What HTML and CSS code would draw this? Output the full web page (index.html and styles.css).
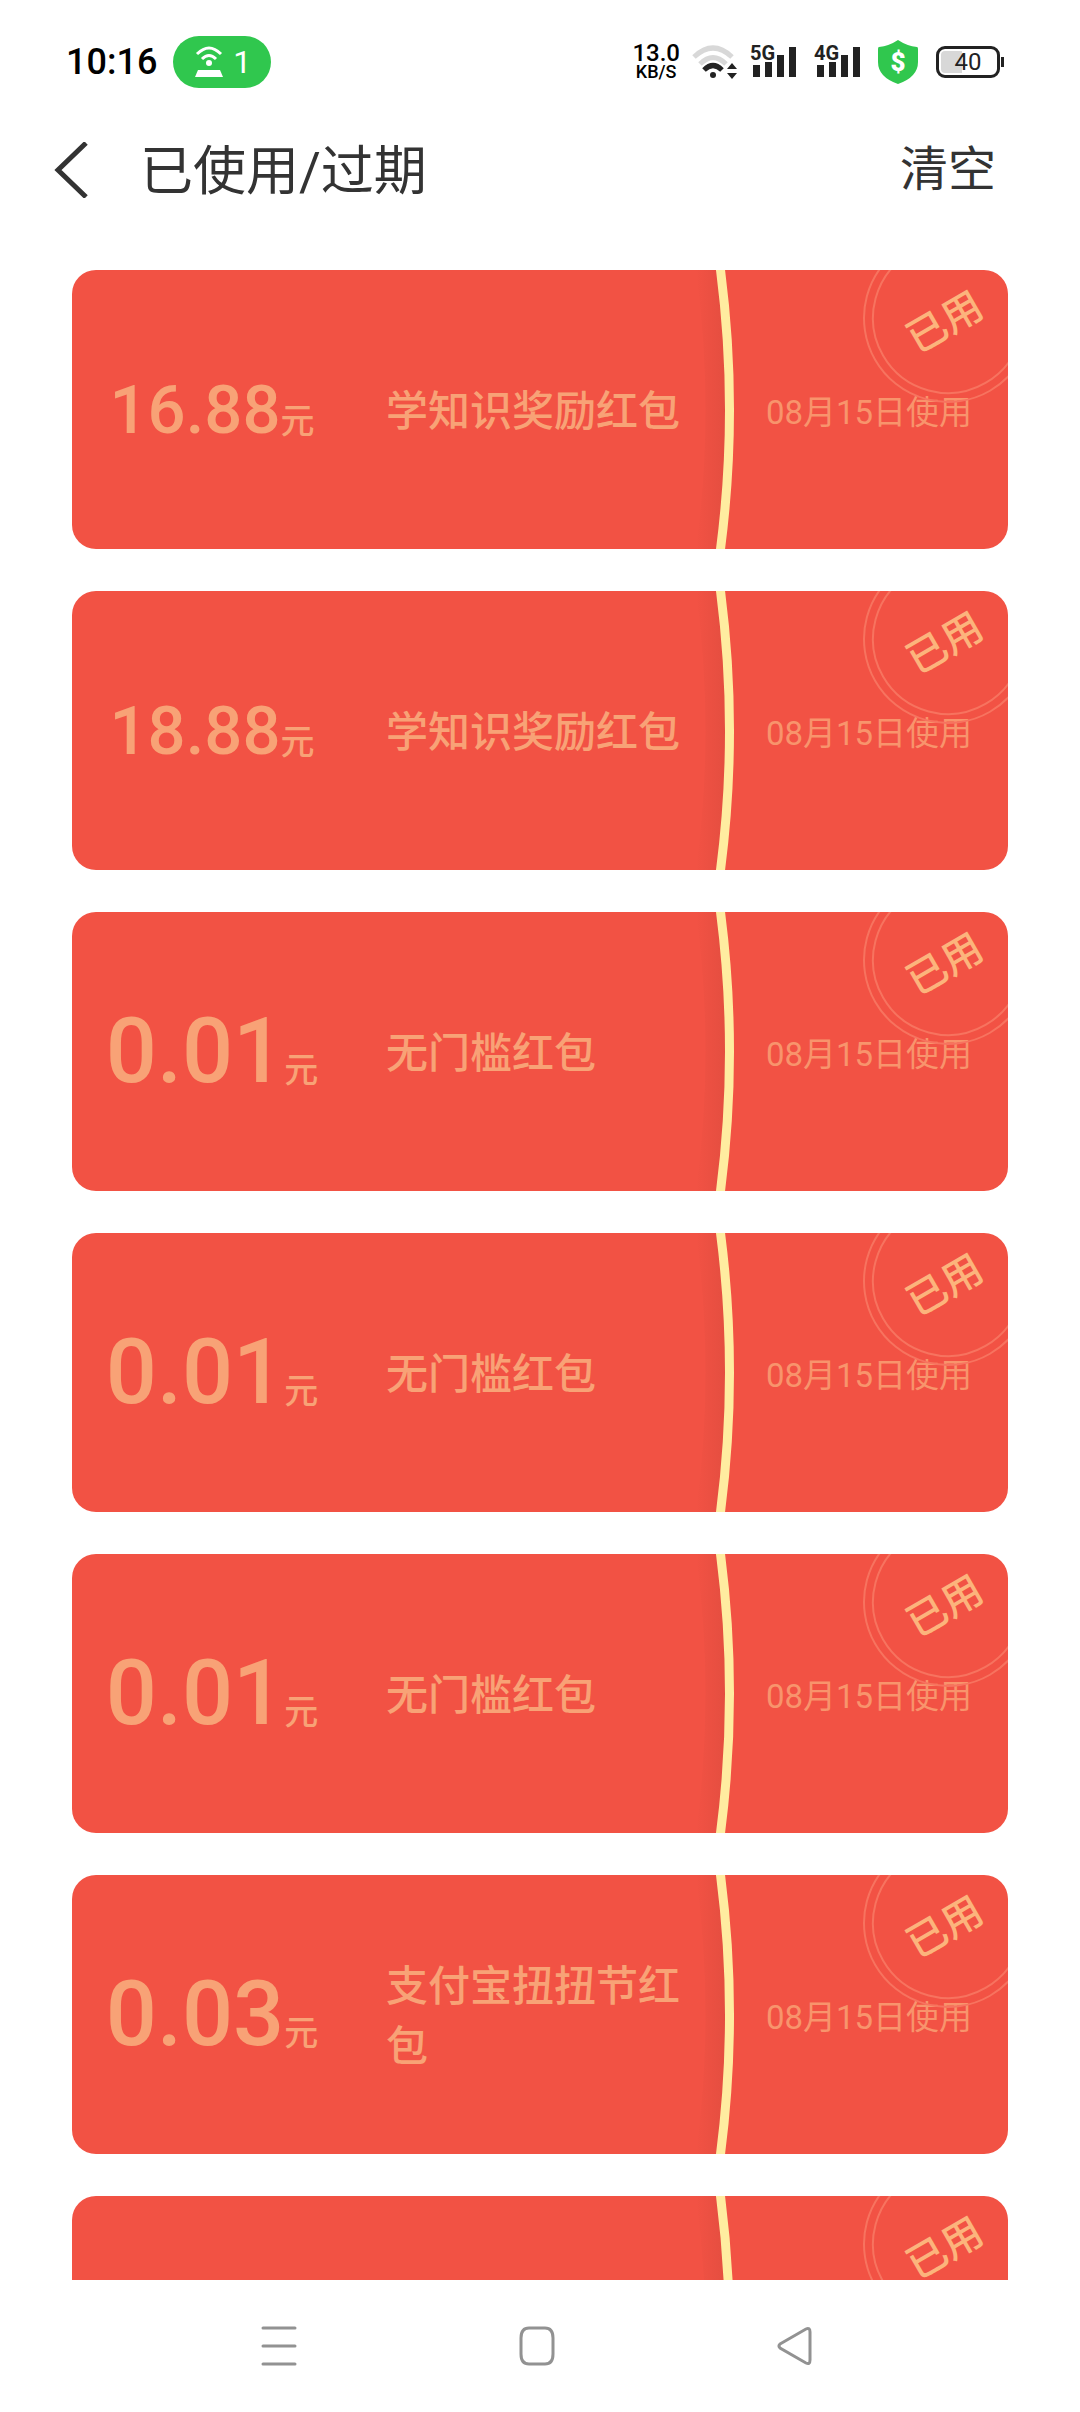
FILE: index.html
```html
<!DOCTYPE html>
<html lang="zh-CN">
<head>
    <meta charset="UTF-8">
    <meta name="viewport" content="width=device-width, initial-scale=1.0">
    <title>已使用/过期</title>
    <link rel="stylesheet" href="styles.css">
</head>
<body>
    <!-- Shared divider between the two halves of a coupon -->
    <svg class="defs" width="0" height="0" aria-hidden="true">
        <defs>
            <linearGradient id="fold" x1="0" x2="1" y1="0" y2="0">
                <stop offset="0" stop-color="#d84a3c" stop-opacity="0"/>
                <stop offset="1" stop-color="#d84a3c" stop-opacity="0.6"/>
            </linearGradient>
            <symbol id="arc" viewBox="0 0 36 279" overflow="visible">
                <path d="M2 0 H26 Q45 140 26 279 H2 Q21 140 2 0" fill="url(#fold)"/>
                <path d="M26 -4 Q45 140 26 283" fill="none" stroke="#ffeca0" stroke-width="9"/>
            </symbol>
        </defs>
    </svg>

    <!-- Status bar -->
    <div class="status">
        <span class="clock">10:16</span>
        <span class="hotspot">
            <svg width="32" height="34" viewBox="0 0 32 34" fill="none" stroke="#fff" stroke-width="3">
                <path d="M4 9 Q16 -3 28 9"/>
                <path d="M9 14 Q16 7 23 14"/>
                <circle cx="16" cy="18" r="3" fill="#fff" stroke="none"/>
                <path d="M5 25 H27 L30 32 H2 Z" fill="#fff" stroke="none"/>
            </svg>
            1
        </span>
        <div class="system">
            <span class="speed"><b>13.0</b><small>KB/S</small></span>
            <svg width="46" height="36" viewBox="0 0 46 36" fill="none" stroke-width="5">
                <path d="M2 13 Q21 -5 40 13" stroke="#d8d8d8"/>
                <path d="M8 20 Q21 7 34 20" stroke="#d8d8d8"/>
                <path d="M12 26 Q21 17 30 26" stroke="#222"/>
                <circle cx="21" cy="31" r="3" fill="#222"/>
                <path d="M35 25 L40 19 L45 25 Z M35 29 L40 35 L45 29 Z" fill="#222"/>
            </svg>
            <svg class="signal" width="46" height="44" viewBox="0 0 46 44">
                <path d="M3 25h7v12h-7z M15 22h7v15h-7z M27 15h7v22h-7z M39 7h7v30h-7z"/>
                <text x="0" y="20">5G</text>
            </svg>
            <svg class="signal" width="46" height="44" viewBox="0 0 46 44">
                <path d="M3 25h7v12h-7z M15 22h7v15h-7z M27 15h7v22h-7z M39 7h7v30h-7z"/>
                <text x="0" y="20">4G</text>
            </svg>
            <svg class="shield" width="40" height="44" viewBox="0 0 40 44">
                <path d="M20 0 Q29 6 39 7 Q40 7 40 9 V22 Q40 37 20 44 Q0 37 0 22 V9 Q0 7 1 7 Q11 6 20 0 Z" fill="#30c74e"/>
                <text x="20" y="31">$</text>
            </svg>
            <span class="battery">40</span>
        </div>
    </div>

    <!-- Title bar -->
    <header class="topbar">
        <button class="back" type="button" aria-label="返回">
            <svg width="34" height="56" viewBox="0 0 34 56" fill="none" stroke="#333" stroke-width="5">
                <path d="M32 1 L4 28 L32 55"/>
            </svg>
        </button>
        <h1>已使用/过期</h1>
        <button class="clear" type="button">清空</button>
    </header>

    <!-- Coupons -->
    <main class="list">
        <article class="card">
            <p class="amount small"><span>16.88</span><i>元</i></p>
            <h2>学知识奖励红包</h2>
            <svg class="arc"><use href="#arc"/></svg>
            <p class="date">08月15日使用</p>
            <span class="stamp">已用</span>
        </article>
        <article class="card">
            <p class="amount small"><span>18.88</span><i>元</i></p>
            <h2>学知识奖励红包</h2>
            <svg class="arc"><use href="#arc"/></svg>
            <p class="date">08月15日使用</p>
            <span class="stamp">已用</span>
        </article>
        <article class="card">
            <p class="amount"><span>0.01</span><i>元</i></p>
            <h2>无门槛红包</h2>
            <svg class="arc"><use href="#arc"/></svg>
            <p class="date">08月15日使用</p>
            <span class="stamp">已用</span>
        </article>
        <article class="card">
            <p class="amount"><span>0.01</span><i>元</i></p>
            <h2>无门槛红包</h2>
            <svg class="arc"><use href="#arc"/></svg>
            <p class="date">08月15日使用</p>
            <span class="stamp">已用</span>
        </article>
        <article class="card">
            <p class="amount"><span>0.01</span><i>元</i></p>
            <h2>无门槛红包</h2>
            <svg class="arc"><use href="#arc"/></svg>
            <p class="date">08月15日使用</p>
            <span class="stamp">已用</span>
        </article>
        <article class="card">
            <p class="amount"><span>0.03</span><i>元</i></p>
            <h2>支付宝扭扭节红包</h2>
            <svg class="arc"><use href="#arc"/></svg>
            <p class="date">08月15日使用</p>
            <span class="stamp">已用</span>
        </article>
        <article class="card">
            <svg class="arc"><use href="#arc"/></svg>
            <span class="stamp">已用</span>
        </article>
    </main>

    <!-- System navigation -->
    <nav class="navbar">
        <button type="button" aria-label="菜单">
            <svg width="36" height="42" viewBox="0 0 36 42" fill="none" stroke="#929292" stroke-width="3">
                <path d="M2 3 H34 M2 21 H34 M2 39 H34" stroke-linecap="round"/>
            </svg>
        </button>
        <button type="button" aria-label="主页">
            <svg width="36" height="42" viewBox="0 0 36 42" fill="none" stroke="#929292" stroke-width="3">
                <path d="M10 3 H26 Q34 3 34 13 V29 Q34 39 26 39 H10 Q2 39 2 29 V13 Q2 3 10 3 Z"/>
            </svg>
        </button>
        <button type="button" aria-label="返回上一页">
            <svg width="36" height="42" viewBox="0 0 36 42" fill="none" stroke="#929292" stroke-width="3">
                <path d="M3 19 L29 4 Q33 2 33 7 V35 Q33 40 29 38 L3 23 Q1 21 3 19 Z"/>
            </svg>
        </button>
    </nav>
</body>
</html>
```

FILE: styles.css
```css
* {
    box-sizing: border-box;
}

body {
    display: flex;
    flex-direction: column;
    height: 100vh;
    margin: 0;
    background-color: #fff;
    color: #333;
    font-family: Roboto, "Noto Sans CJK SC", sans-serif;
}

h1, h2, p {
    margin: 0;
    font-weight: 400;
}

button {
    padding: 0;
    border: none;
    background: none;
    color: inherit;
    font-family: inherit;
    cursor: pointer;
}

svg {
    display: block;
    flex: none;
}

.defs {
    position: absolute;
}

/* Status bar */
.status {
    display: flex;
    align-items: center;
    height: 124px;
    padding: 0 76px 0 66px;
    color: #000;
}

.clock {
    font-size: 36px;
    font-weight: 500;
}

.hotspot {
    display: flex;
    align-items: center;
    gap: 8px;
    height: 52px;
    margin-left: 16px;
    padding: 0 20px;
    border-radius: 26px;
    background-color: #30c74e;
    color: #fff;
    font-size: 32px;
}

.system {
    display: flex;
    align-items: center;
    gap: 12px;
    margin-left: auto;
}

.speed {
    display: flex;
    flex-direction: column;
    align-items: center;
    font-weight: 500;
}

.speed b {
    font-size: 24px;
    font-weight: 500;
    line-height: 20px;
}

.speed small {
    font-size: 18px;
    line-height: 18px;
}

.signal, .shield {
    margin-right: 6px;
}

.signal {
    fill: #222;
    font-size: 20px;
    font-weight: 700;
}

.signal text {
    stroke: #fff;
    stroke-width: 3px;
    paint-order: stroke;
}

.shield text {
    fill: #fff;
    font-size: 26px;
    font-weight: 900;
    text-anchor: middle;
}

.battery {
    position: relative;
    width: 64px;
    height: 32px;
    margin-right: 4px;
    border: 3px solid #222;
    border-radius: 9px;
    background: linear-gradient(to right, #d8d8d8 40%, #fff 40%);
    box-shadow: inset 0 0 0 2px #fff;
    color: #222;
    font-size: 24px;
    line-height: 26px;
    text-align: center;
}

.battery::after {
    content: "";
    position: absolute;
    top: 8px;
    right: -7px;
    width: 3px;
    height: 10px;
    background-color: #222;
}

/* Title bar */
.topbar {
    display: flex;
    align-items: center;
    height: 92px;
    padding: 0 84px 0 54px;
}

.topbar h1 {
    margin-left: 52px;
    padding-top: 4px;
    font-size: 53px;
    line-height: 72px;
}

.clear {
    margin-left: auto;
    font-size: 48px;
    line-height: 72px;
}

/* Coupons */
.list {
    display: flex;
    flex: 1;
    flex-direction: column;
    gap: 42px;
    min-height: 0;
    padding: 54px 72px 0;
    overflow-y: auto;
    scrollbar-width: none;
}

.card {
    position: relative;
    display: flex;
    flex: none;
    align-items: center;
    justify-content: flex-end;
    height: 279px;
    border-radius: 24px;
    background-color: #f25244;
    color: #f8a276;
    overflow: hidden;
}

.amount {
    display: flex;
    align-items: baseline;
    justify-content: center;
    width: 280px;
    font-size: 90px;
    font-weight: 500;
    line-height: 90px;
}

.amount.small {
    font-size: 67px;
}

.amount i {
    font-size: 34px;
    font-style: normal;
    line-height: 34px;
}

.card h2 {
    flex: 1;
    margin-left: 34px;
    padding-top: 4px;
    font-size: 42px;
    font-weight: 500;
    line-height: 60px;
}

.arc {
    width: 36px;
    height: 279px;
    overflow: visible;
}

.date {
    width: 278px;
    color: #f8946c;
    font-size: 33px;
    text-align: center;
}

/* A card that has only its artwork keeps the divider in place */
.arc:first-child {
    margin-right: 278px;
}

.stamp {
    position: absolute;
    top: -37px;
    right: -25px;
    width: 170px;
    height: 170px;
    padding-right: 10px;
    border: 2px solid #f7735f;
    border-radius: 50%;
    color: #fcb47c;
    font-size: 40px;
    font-weight: 500;
    line-height: 172px;
    text-align: center;
    transform: rotate(-30deg);
}

.stamp::before {
    content: "";
    position: absolute;
    inset: 7px;
    border: 2px solid #f7735f;
    border-radius: 50%;
}

/* System navigation */
.navbar {
    display: flex;
    align-items: center;
    justify-content: center;
    gap: 222px;
    height: 132px;
    padding-right: 6px;
}
```
